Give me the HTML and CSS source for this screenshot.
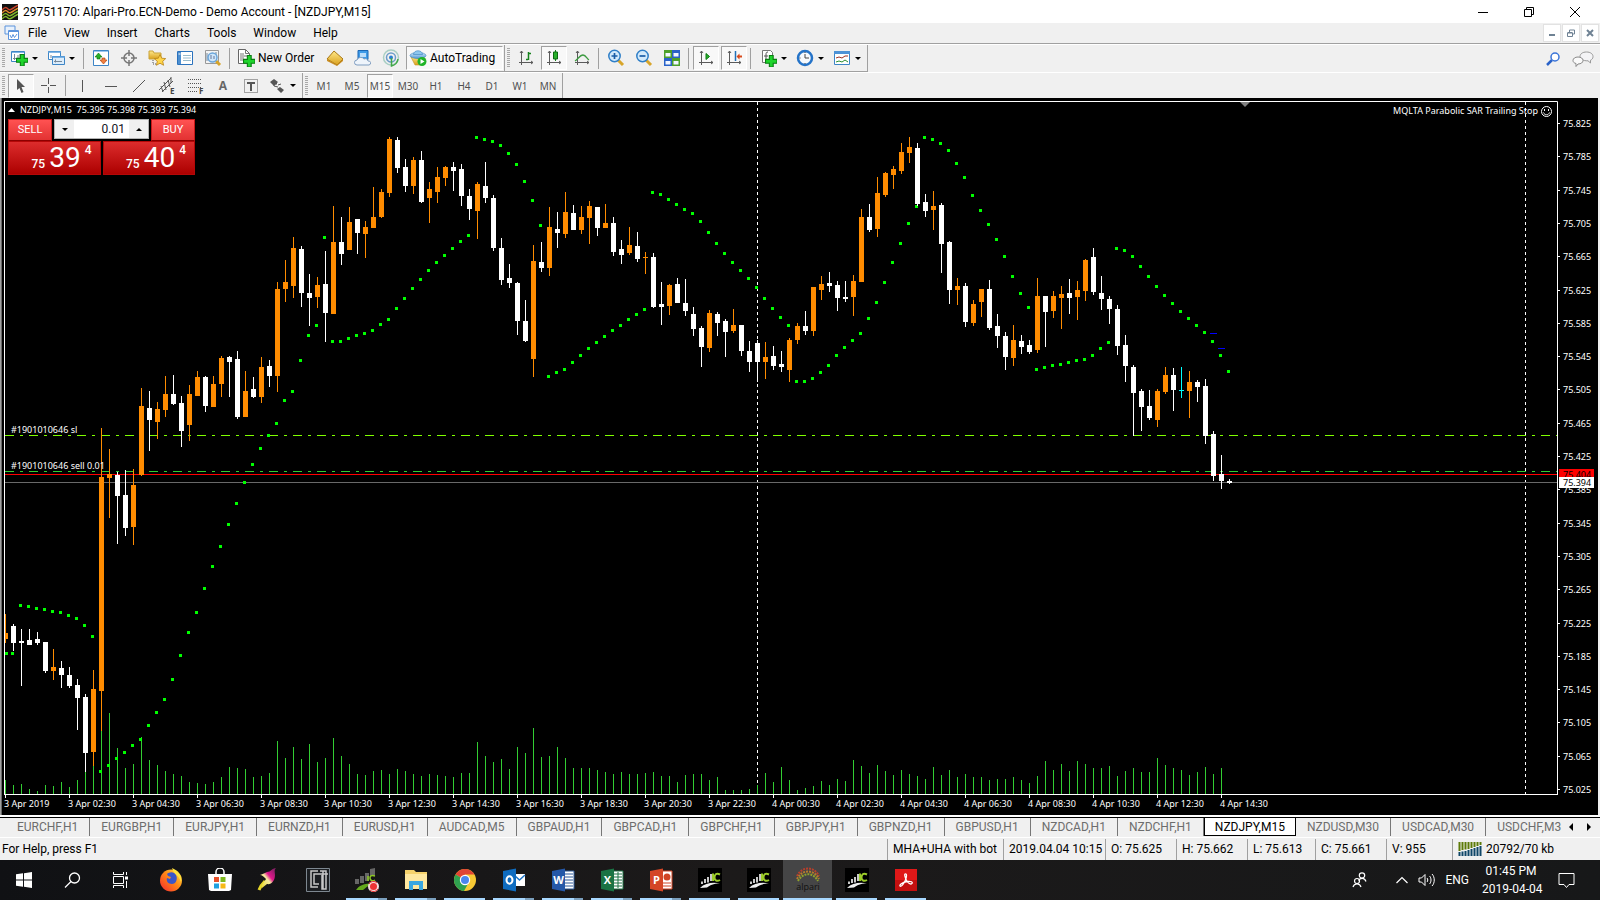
FILE: index.html
```html
<!DOCTYPE html>
<html lang="en">
<head>
<meta charset="utf-8">
<title>29751170: Alpari-Pro.ECN-Demo - Demo Account - [NZDJPY,M15]</title>
<link rel="stylesheet" href="styles.css">
</head>
<body>
<svg class="defs" width="0" height="0" aria-hidden="true">
  <defs>
    <linearGradient id="gold" x1="0" y1="0" x2="0" y2="1"><stop offset="0" stop-color="#ffe98a"/><stop offset="1" stop-color="#d9a01c"/></linearGradient>
    <linearGradient id="sky" x1="0" y1="0" x2="0" y2="1"><stop offset="0" stop-color="#d8ecfb"/><stop offset="1" stop-color="#4d97d6"/></linearGradient>
    <linearGradient id="fox" x1="0" y1="1" x2="1" y2="0"><stop offset="0" stop-color="#f5252f"/><stop offset=".55" stop-color="#ff8a16"/><stop offset="1" stop-color="#fff04a"/></linearGradient>
    <linearGradient id="pix" x1="0" y1="1" x2="1" y2="0"><stop offset="0" stop-color="#e8d821"/><stop offset=".45" stop-color="#f5e9a0"/><stop offset=".6" stop-color="#e0188c"/><stop offset="1" stop-color="#70205c"/></linearGradient>
    <symbol id="plus" viewBox="0 0 11 11"><path d="M4 .5h3.500v3.500h3.500v3.500H7.500v3.500H4V7.500H.5V4H4z" fill="#1fd42c" stroke="#0a7d12" stroke-width="1"/></symbol>
    <symbol id="axes" viewBox="0 0 16 16"><path d="M3.500 1v14M1 12.500h14M2 3l1.500-2L5 3M13 11l2 1.500-2 1.500" fill="none" stroke="#5a5a5a"/></symbol>
    <symbol id="ic" viewBox="0 0 24 24"><path d="M0 0h24v24H0z" fill="#000"/><path d="M3 16v-2.500h2V16zM6 15v-4h2v4zM9 14.500V9h2v5.500zM12 13V6h2v7z" fill="#c9c9c9"/><path d="M15 5.500V13" stroke="#9ccb2a" stroke-width="2"/><path d="M22 6.500c-4-2-5.500.5-5.500 3s2 4.500 5.500 2.500" stroke="#9ccb2a" stroke-width="2" fill="none"/><path d="M2 20c5-5 13-6 20-4.500-7 0-10 2-13 4z" fill="#eee"/></symbol>
  </defs>
</svg>

<header class="titlebar">
  <svg class="app-icon" width="16" height="16" viewBox="0 0 16 16"><path d="M0 0h16v16H0z" fill="#111"/><path d="M0 6c3-3 4-3 6-1s4 0 10-4" stroke="#c8432a" stroke-width="1.500" fill="none"/><path d="M0 9c3-3 4-3 6-1s4 0 10-4" stroke="#e08b2c" stroke-width="1.500" fill="none"/><path d="M0 12c3-3 4-3 6-1s4 0 10-4M0 15c3-3 4-3 6-1s4 0 10-4" stroke="#7fb52c" stroke-width="1.500" fill="none"/></svg>
  <h1 class="title">29751170: Alpari-Pro.ECN-Demo - Demo Account - [NZDJPY,M15]</h1>
  <button class="win-btn" aria-label="Minimize"><svg width="10" height="10"><path d="M0 5.500h10" stroke="#000"/></svg></button>
  <button class="win-btn" aria-label="Restore"><svg width="10" height="10"><path d="M.5 2.500h7v7h-7zM2.500 2.500v-2h7v7h-2" stroke="#000" fill="none"/></svg></button>
  <button class="win-btn" aria-label="Close"><svg width="10" height="10"><path d="M0 0l10 10M10 0L0 10" stroke="#000"/></svg></button>
</header>

<nav class="menubar" aria-label="Main menu">
  <svg class="menu-icon" width="16" height="16" viewBox="0 0 16 16"><path d="M1 1h10v8H1z" fill="#e8f1fc" stroke="#5b93dc"/><path d="M4.500 5.500h10v9h-10z" fill="#fff" stroke="#5b93dc"/><path d="M5 6.500h9" stroke="#5b93dc"/><path d="M6 10l1.500 3L9 9.500l1.500 3L13 9" stroke="#5b93dc" fill="none"/></svg>
  <button>File</button><button>View</button><button>Insert</button><button>Charts</button><button>Tools</button><button>Window</button><button>Help</button>
  <span class="mdi">
    <button aria-label="Minimize chart"><svg width="8" height="8"><path d="M1 6h6" stroke="#6f8294" stroke-width="2"/></svg></button>
    <button aria-label="Restore chart"><svg width="8" height="8"><path d="M.5 4h5v3.500h-5zM2.500 3V1h5v4H6M.5 3.500h5" stroke="#6f8294" fill="none"/></svg></button>
    <button aria-label="Close chart"><svg width="8" height="8"><path d="M1 1l6 6M7 1L1 7" stroke="#6f8294" stroke-width="2"/></svg></button>
  </span>
</nav>

<div class="toolrow">
  <div class="toolbar">
    <i class="grip"></i>
    <button class="dd" aria-label="New chart"><svg width="18" height="18" viewBox="0 0 18 18"><path d="M1.500 2.500h13v10h-13z" fill="#fff" stroke="#3d85c6"/><path d="M2 3.500h12" stroke="#7db4e6"/><path d="M4.500 5v6M3 9.500h3M8 6v3M10 5v4" stroke="#789"/><use href="#plus" x="6" y="5" width="12" height="12"/></svg><i class="caret"></i></button>
    <button class="dd" aria-label="Profiles"><svg width="18" height="18" viewBox="0 0 18 18"><path d="M1.500 2.500h12v8h-12z" fill="#fff" stroke="#3d85c6"/><path d="M5.500 7.500h12v8h-12z" fill="#dcecfa" stroke="#3d85c6"/><path d="M1 3h13M5 8h13" stroke="#5b9fdb" stroke-width="1.500"/><path d="M7 12.500h8M8.500 10.500v3M4 6v3" stroke="#789"/></svg><i class="caret"></i></button>
    <i class="sep"></i>
    <button class="tool" aria-label="Market Watch"><svg width="18" height="18" viewBox="0 0 18 18"><path d="M1.500 1.500h15v15h-15z" fill="#fff" stroke="#3d85c6"/><path d="M2 2.500h14" stroke="#9cc6ee"/><path d="M6.500 4l3.500 4H8v2H5V8H3z" fill="#27b02a" stroke="#08730d" stroke-width=".6"/><path d="M11.500 15L8 11h2V9h3v2h2z" fill="#f08040" stroke="#a83a08" stroke-width=".6"/></svg></button>
    <button class="tool" aria-label="Data Window"><svg width="16" height="16" viewBox="0 0 16 16"><circle cx="8" cy="8" r="5" fill="#eee" stroke="#777" stroke-width="1.500"/><path d="M8 0v6M8 10v6M0 8h6M10 8h6" stroke="#777" stroke-width="1.500"/></svg></button>
    <button class="tool" aria-label="Navigator"><svg width="18" height="18" viewBox="0 0 18 18"><path d="M1 10V2h4l1 2h7v6z" fill="url(#gold)" stroke="#c9a33a"/><path d="M5 11v4h4" stroke="#555" stroke-dasharray="1 1" fill="none"/><path d="M12 5.500l1.700 3.700 4 .4-3 2.700.9 4-3.600-2.100-3.600 2.100.9-4-3-2.700 4-.4z" fill="#ffd54a" stroke="#b88214" stroke-width=".8"/></svg></button>
    <button class="tool" aria-label="Terminal"><svg width="16" height="16" viewBox="0 0 16 16"><path d="M.5 1.500h15v13H.5z" fill="#fff" stroke="#2a72bd"/><path d="M1 2h3v12H1z" fill="#4d8fd0"/><path d="M6 5.500h8M6 8h8M6 10.500h8" stroke="#9bc"/><path d="M1.500 4h2" stroke="#fff"/></svg></button>
    <button class="tool" aria-label="Strategy Tester"><svg width="18" height="18" viewBox="0 0 18 18"><path d="M1.500 1.500h13v13h-13z" fill="#f4f4f4" stroke="#999"/><path d="M3 4v8M12 3v5" stroke="#789"/><path d="M12 12l4 4" stroke="#d8a52a" stroke-width="3"/><circle cx="8.500" cy="8.500" r="4.500" fill="#cfe6fa" stroke="#6aa5da" stroke-width="1.500"/><path d="M7 6v4M10 7v3" stroke="#679"/></svg></button>
    <i class="sep"></i>
    <button class="neworder"><svg width="18" height="18" viewBox="0 0 18 18"><path d="M1.500.5h7l4 4v10h-11z" fill="#fff" stroke="#666"/><path d="M8.500.5v4h4M3 5h4M3 7h7M3 9h4M3 11h4" stroke="#777" fill="none"/><use href="#plus" x="6" y="6" width="12" height="12"/></svg>New Order</button>
    <button class="tool" aria-label="MetaEditor"><svg width="18" height="18" viewBox="0 0 18 18"><path d="M8 2l9 8-6 6-10-6z" fill="url(#gold)" stroke="#a97815"/><path d="M1 10l10 6 6-6v2l-6 5-10-5z" fill="#c98d20"/></svg></button>
    <button class="tool" aria-label="Virtual Hosting"><svg width="18" height="18" viewBox="0 0 18 18"><path d="M4 1.500h10v9H4z" fill="#3f9be8" stroke="#1a66b4"/><path d="M6 5h6M6 7h6" stroke="#e6f3ff" stroke-width="1.500"/><path d="M3 16a2.500 2.500 0 010-5 4 4 0 017-1 3 3 0 014 2 2 2 0 011 4z" fill="#eef4fb" stroke="#7f9dc0"/></svg></button>
    <button class="tool" aria-label="Signals"><svg width="18" height="18" viewBox="0 0 18 18" fill="none"><circle cx="9" cy="8.500" r="7.500" stroke="#a9cfc4" stroke-width="1.500"/><circle cx="9" cy="8.500" r="4.500" stroke="#6d9cc9" stroke-width="1.500"/><circle cx="9" cy="8.500" r="2" fill="#2a7fd2"/><path d="M9.500 9v8c4-1 6-4 6.500-7" stroke="#42a848" stroke-width="1.500"/></svg></button>
    <button class="auto pressed"><svg width="18" height="18" viewBox="0 0 18 18"><path d="M2 8l14-1-5 9H6z" fill="url(#gold)" stroke="#c29322" stroke-width=".6"/><ellipse cx="9" cy="6.500" rx="8" ry="3" fill="url(#sky)" stroke="#3682c0" stroke-width=".6"/><path d="M4.500 5.500c0-5 9-5 9 0z" fill="#8fc7ee" stroke="#3682c0" stroke-width=".6"/><circle cx="13" cy="12.500" r="4.500" fill="#20b428"/><path d="M11.500 10v5l4-2.500z" fill="#fff"/></svg>AutoTrading</button>
    <i class="edge"></i><i class="grip"></i>
    <button class="tool" aria-label="Bar chart"><svg width="16" height="16" viewBox="0 0 16 16"><use href="#axes" width="16" height="16"/><path d="M10.500 2v8M8 9.500h2M11 3.500h2" stroke="#16821c" stroke-width="1.500"/></svg></button>
    <button class="tool pressed" aria-label="Candlesticks"><svg width="16" height="16" viewBox="0 0 16 16"><use href="#axes" width="16" height="16"/><path d="M9.500 0v11" stroke="#16821c"/><path d="M7.500 2h4v7h-4z" fill="#27b02a" stroke="#0a6a10"/></svg></button>
    <button class="tool" aria-label="Line chart"><svg width="16" height="16" viewBox="0 0 16 16"><use href="#axes" width="16" height="16"/><path d="M1 11c3-2 5-6 8-6s4 4 6 5" stroke="#3c9a40" stroke-width="1.300" fill="none"/></svg></button>
    <i class="sep"></i>
    <button class="tool" aria-label="Zoom In"><svg width="18" height="18" viewBox="0 0 18 18"><path d="M11 11l5 5" stroke="#d8a52a" stroke-width="3"/><circle cx="7.500" cy="7" r="5.700" fill="#d3eafb" stroke="#2f7fc8" stroke-width="1.500"/><path d="M4.500 7h6M7.500 4v6" stroke="#1a5da6" stroke-width="1.700"/></svg></button>
    <button class="tool" aria-label="Zoom Out"><svg width="18" height="18" viewBox="0 0 18 18"><path d="M11 11l5 5" stroke="#d8a52a" stroke-width="3"/><circle cx="7.500" cy="7" r="5.700" fill="#d3eafb" stroke="#2f7fc8" stroke-width="1.500"/><path d="M4.500 7h6" stroke="#1a5da6" stroke-width="1.700"/></svg></button>
    <button class="tool" aria-label="Tile Windows"><svg width="16" height="16" viewBox="0 0 16 16"><path d="M0 0h8v8H0zM8 8h8v8H8z" fill="#4da02a"/><path d="M8 0h8v8H8zM0 8h8v8H0z" fill="#2a62c8"/><path d="M1.500 3h5v3.500h-5zM9.500 3h5v3.500h-5zM1.500 11h5v3.500h-5zM9.500 11h5v3.500h-5z" fill="#f2f7ff"/></svg></button>
    <i class="sep"></i>
    <button class="tool pressed" aria-label="Auto Scroll"><svg width="16" height="16" viewBox="0 0 16 16"><use href="#axes" width="16" height="16"/><path d="M8 3.500v6L11.500 6.500z" fill="#27b02a" stroke="#0a7a10"/></svg></button>
    <button class="tool pressed" aria-label="Chart Shift"><svg width="16" height="16" viewBox="0 0 16 16"><use href="#axes" width="16" height="16"/><path d="M9.500 1v10" stroke="#2070b8" stroke-width="1.500"/><path d="M10.500 6.500l3-3v2H16v2h-2.500v2z" fill="#d84a1c"/></svg></button>
    <i class="sep wide"></i>
    <button class="dd" aria-label="Indicators"><svg width="18" height="18" viewBox="0 0 18 18"><path d="M3.500 1.500h8l2 2v10h-10z" fill="#fff" stroke="#777"/><path d="M9 3c-2 0-2 1-2 3v6M5 7h4" stroke="#555" fill="none"/><use href="#plus" x="6" y="6" width="12" height="12"/></svg><i class="caret"></i></button>
    <button class="dd" aria-label="Periodicity"><svg width="18" height="18" viewBox="0 0 18 18"><circle cx="9" cy="9" r="7" fill="#f5f9fd" stroke="#2473c8" stroke-width="2.500"/><path d="M9 5v4h4M9 3v1M9 14v1M3.500 9h1" stroke="#444" fill="none"/></svg><i class="caret"></i></button>
    <button class="dd" aria-label="Templates"><svg width="18" height="18" viewBox="0 0 18 18"><path d="M1.500 2.500h15v13h-15z" fill="#fff" stroke="#3d85c6"/><path d="M1 3.500h16" stroke="#4d92d6" stroke-width="3"/><path d="M3 9l3-1 3 1 3-2 3 0" stroke="#a03020" fill="none"/><path d="M3 13l3-1 3 1 3-2 3 2" stroke="#2c9030" fill="none"/></svg><i class="caret"></i></button>
    <i class="edge"></i>
  </div>
  <div class="tool-right">
    <button aria-label="Search"><svg width="14" height="14" viewBox="0 0 14 14"><path d="M1 13l5-5" stroke="#2a62c8" stroke-width="2.500"/><circle cx="9" cy="5" r="4" fill="#fff" stroke="#3a74d8" stroke-width="1.500"/></svg></button>
    <button aria-label="Chat"><svg width="22" height="16" viewBox="0 0 22 16"><path d="M14.500 1c4 0 6.500 2 6.500 4.500 0 2-1 3-2.500 3.700V12l-2.500-2.200C11 10 8 8 8 5.500S10.500 1 14.500 1z" fill="#f4f4f6" stroke="#999"/><path d="M6 6c3 0 5 1.500 5 3.500S9 13 6 13l-2 2.500v-3C2 12 1 11 1 9.500 1 7.500 3 6 6 6z" fill="#fafafa" stroke="#888"/></svg></button>
  </div>
</div>

<div class="toolrow second">
  <div class="toolbar">
    <i class="grip"></i>
    <button class="tool pressed" aria-label="Cursor"><svg width="12" height="16" viewBox="0 0 12 16"><path d="M2 1l8 8H6.500l2 5-2 1-2-5L2 12z" fill="#555"/></svg></button>
    <button class="tool" aria-label="Crosshair"><svg width="16" height="16"><path d="M7.500 0v6M7.500 9v6M0 7.500h6M9 7.500h6" stroke="#555"/></svg></button>
    <i class="sep"></i>
    <button class="tool" aria-label="Vertical line"><svg width="14" height="14"><path d="M6.500 1v12" stroke="#555"/></svg></button>
    <button class="tool" aria-label="Horizontal line"><svg width="14" height="14"><path d="M1 7.500h12" stroke="#555"/></svg></button>
    <button class="tool" aria-label="Trendline"><svg width="14" height="14"><path d="M1 13L13 1" stroke="#555"/></svg></button>
    <button class="tool" aria-label="Equidistant channel"><svg width="17" height="18"><path d="M0 13L12 1M3 15L14 4M2 9l2 6M5 5l2 8M9 3l2 7M12 0l0 6" stroke="#555"/><text x="11" y="17" class="ic-t">E</text></svg></button>
    <button class="tool" aria-label="Fibonacci"><svg width="17" height="18"><path d="M1 2.500h14M1 6.500h14M1 10.500h14M1 14.500h9" stroke="#555" stroke-dasharray="1 1"/><text x="12" y="17" class="ic-t">F</text></svg></button>
    <button class="tool" aria-label="Text"><span class="letter">A</span></button>
    <button class="tool" aria-label="Text label"><svg width="14" height="14"><path d="M.5.5h13v13H.5z" fill="none" stroke="#555" stroke-dasharray="1 1"/><path d="M3 4h8M7 4v8" stroke="#555" stroke-width="2"/></svg></button>
    <button class="dd" aria-label="Arrows"><svg width="18" height="18" viewBox="0 0 18 18"><path d="M5 3l4 4H6v2l4 1" fill="none" stroke="#555"/><path d="M2 5l4-3 4 3-4 4zM9 12l3-2 4 3-3 3z" fill="#555"/><path d="M10 8l3-1" stroke="#555"/></svg><i class="caret"></i></button>
    <i class="edge"></i><i class="grip"></i>
    <button class="tool tf">M1</button><button class="tool tf">M5</button><button class="tool tf pressed">M15</button><button class="tool tf">M30</button><button class="tool tf">H1</button><button class="tool tf">H4</button><button class="tool tf">D1</button><button class="tool tf">W1</button><button class="tool tf">MN</button>
    <i class="edge"></i>
  </div>
</div>

<main class="chart">
  <svg id="plot" viewBox="0 98 1600 717" preserveAspectRatio="xMinYMin meet" role="img" aria-label="NZDJPY M15 candlestick chart"></svg>
  <section class="trade" aria-label="One click trading">
    <button class="side">SELL</button>
    <span class="spin"><button aria-label="Decrease volume"><i class="caret"></i></button><input value="0.01" aria-label="Volume"><button aria-label="Increase volume"><i class="caret up"></i></button></span>
    <button class="side">BUY</button>
    <button class="price"><span>75</span><b>39</b><sup>4</sup></button>
    <button class="price"><span>75</span><b>40</b><sup>4</sup></button>
  </section>
</main>

<nav class="tabs" aria-label="Charts">
  <button>EURCHF,H1</button><button>EURGBP,H1</button><button>EURJPY,H1</button><button>EURNZD,H1</button><button>EURUSD,H1</button><button>AUDCAD,M5</button><button>GBPAUD,H1</button><button>GBPCAD,H1</button><button>GBPCHF,H1</button><button>GBPJPY,H1</button><button>GBPNZD,H1</button><button>GBPUSD,H1</button><button>NZDCAD,H1</button><button>NZDCHF,H1</button><button class="active">NZDJPY,M15</button><button>NZDUSD,M30</button><button>USDCAD,M30</button><button class="last">USDCHF,M3</button>
  <span class="scroll"><button aria-label="Scroll left"><i class="caret left"></i></button><button aria-label="Scroll right"><i class="caret right"></i></button></span>
</nav>

<footer class="status">
  <span class="help">For Help, press F1</span>
  <span class="w116">MHA+UHA with bot</span><span class="w102">2019.04.04 10:15</span><span class="w71">O: 75.625</span><span class="w71">H: 75.662</span><span class="w68">L: 75.613</span><span class="w71">C: 75.661</span><span class="w66">V: 955</span>
  <span class="conn"><svg width="24" height="14" viewBox="0 0 24 14"><path d="M1.500 0v9M4.500 0v8M7.500 0v7.500M10.500 0v7M13.500 0v6M16.500 0v5M19.500 0v4M22.500 0v3" stroke="#5d7a08" stroke-width="2"/><path d="M1.500 14v-4M4.500 14V9.500M7.500 14V9M10.500 14V8M13.500 14V7M16.500 14V6M19.500 14V5M22.500 14V4" stroke="#0f4668" stroke-width="2"/></svg>20792/70 kb</span>
</footer>

<nav class="taskbar" aria-label="Taskbar">
  <button class="sys" aria-label="Start"><svg width="16" height="16"><path d="M0 2.300l7-1v6.200H0zM8 1.200L16 0v7.500H8zM0 8.500h7v6.200l-7-1zM8 8.500h8V16l-8-1.200z" fill="#fff"/></svg></button>
  <button class="sys" aria-label="Search"><svg width="17" height="17"><circle cx="10.500" cy="6" r="5" stroke="#fff" fill="none" stroke-width="1.300"/><path d="M7 9.500L1 15.500" stroke="#fff" stroke-width="1.300"/></svg></button>
  <button class="sys" aria-label="Task View"><svg width="17" height="16"><path d="M1.500 4.500h10v7h-10zM1.500 0v2.500h10V0M1.500 16v-2.500h10V16M14.500 0v3M14.500 9v7" stroke="#fff" fill="none"/><path d="M13 4.500h3v3h-3z" fill="#fff"/></svg></button>
  <button aria-label="Firefox"><svg width="24" height="24"><circle cx="12" cy="12.500" r="11" fill="url(#fox)"/><path d="M8 6c2-2 7-3 9 1s0 9-4 9-6-3-5-6l3 1 1-2-3-1z" fill="#3a56c8"/><path d="M13 0c7 3 10 8 9 14-2-7-7-7-9-14z" fill="#ffe23c"/></svg></button>
  <button aria-label="Store"><svg width="24" height="24"><path d="M8 6V4a4 4 0 018 0v2" stroke="#fff" stroke-width="1.500" fill="none"/><path d="M0 6h24l-1 16-2 1H3l-2-1z" fill="#fff"/><path d="M6 9h5v5H6z" fill="#e8502a"/><path d="M12.500 9h5v5h-5z" fill="#7db81c"/><path d="M6 15.500h5v5H6z" fill="#1ea0e0"/><path d="M12.500 15.500h5v5h-5z" fill="#f6b916"/></svg></button>
  <button aria-label="Bird app"><svg width="24" height="24"><path d="M2 22c1-3 3-6 6-9" stroke="#e6d629" stroke-width="3" fill="none"/><path d="M5 17l4-6c-2-2-4-4-6-4 3-1 5-2 7-3 4 0 5-4 9-4-2 2-1 4-1 7 0 6-4 10-8 9l-5 4z" fill="url(#pix)"/></svg></button>
  <button aria-label="CCT"><svg width="24" height="24"><path d="M.5.500h23v23H.5z" fill="#1b1e22" stroke="#7d8790"/><path d="M12 3H5v16h7M13 6H8v10h5M11 6h11M17 3v18M14 3h6v18h-4v-14" stroke="#c8c8c8" fill="none" stroke-width="1.500"/></svg></button>
  <button class="run multi" aria-label="IC Markets"><svg width="24" height="24"><path d="M0 16v-5h4v5zM5 15V8h4v7zM10 13V5h4v8zM15 8V1l5-1v8z" fill="#666"/><path d="M13 8v5M20 8c-4-1-5 0-5 2s2 4 5 2" stroke="#8cc820" stroke-width="1.500" fill="none"/><path d="M1 22c4-6 10-7 20-6-8 1-9 3-13 6z" fill="#64a81c"/><circle cx="18.500" cy="18.500" r="5.500" fill="#f3dede"/><circle cx="18.500" cy="18.500" r="3.500" fill="#e33"/><path d="M14 16a5 5 0 018-1M23 21a5 5 0 01-8 1" stroke="#e33" fill="none"/></svg></button>
  <button class="run multi" aria-label="File Explorer"><svg width="24" height="22"><path d="M1 1h9l2 2h11v17H1z" fill="#f6d26c"/><path d="M1 5h22v15H1z" fill="#ffe8a0"/><path d="M5 21v-9h14v9h-4v-5H9v5z" fill="#3aa7e0"/></svg></button>
  <button class="run" aria-label="Chrome"><svg width="24" height="24"><circle cx="12" cy="12" r="11" fill="#f7c934"/><path d="M12 12L2.500 6.500A11 11 0 0121.500 6.500H12z" fill="#e04434"/><path d="M12 12L2.500 6.500A11 11 0 0011 23l5-9z" fill="#2fa14f"/><circle cx="12" cy="12" r="5.200" fill="#fff"/><circle cx="12" cy="12" r="4" fill="#4a86ee"/></svg></button>
  <button class="run multi" aria-label="Outlook"><svg width="24" height="24"><path d="M12 6h11v12H12z" fill="#fff"/><path d="M12 7l5.500 5L23 7" stroke="#1b74c8" stroke-width="1.500" fill="none"/><path d="M1 3l13-2.500v23L1 21z" fill="#0f6cc0"/><ellipse cx="7.500" cy="12" rx="3" ry="3.700" stroke="#fff" stroke-width="2" fill="none"/></svg></button>
  <button class="run multi" aria-label="Word"><svg width="24" height="24"><path d="M12 3h11v18H12z" fill="#fff" stroke="#2b5797"/><path d="M14 6h8M14 9h8M14 12h8M14 15h8M14 18h8" stroke="#2b5797"/><path d="M1 3l13-2.500v23L1 21z" fill="#2558a8"/><text x="7.500" y="16" class="of">W</text></svg></button>
  <button class="run multi" aria-label="Excel"><svg width="24" height="24"><path d="M12 3h11v18H12z" fill="#fff" stroke="#1f7244"/><path d="M14 6h8M14 9h8M14 12h8M14 15h8M14 18h8M18 4v16" stroke="#1f7244"/><path d="M1 3l13-2.500v23L1 21z" fill="#1a7344"/><text x="7.500" y="16" class="of">X</text></svg></button>
  <button class="run multi" aria-label="PowerPoint"><svg width="24" height="24"><path d="M12 3h11v18H12z" fill="#fff" stroke="#d04525"/><circle cx="18" cy="9" r="3.500" fill="#d04525"/><path d="M14 15h8M14 18h8" stroke="#d04525"/><path d="M1 3l13-2.500v23L1 21z" fill="#d44626"/><text x="7.500" y="16" class="of">P</text></svg></button>
  <button class="run" aria-label="IC terminal 1"><svg width="24" height="24"><use href="#ic" width="24" height="24"/></svg></button>
  <button class="run" aria-label="IC terminal 2"><svg width="24" height="24"><use href="#ic" width="24" height="24"/></svg></button>
  <button class="run current" aria-label="Alpari"><svg width="26" height="26"><g fill="none" stroke-width="2" stroke-dasharray="2 1"><path d="M2 9c5-10 17-10 22 0" stroke="#b8402c"/><path d="M2 12c5-10 17-10 22 0" stroke="#b87a2c"/><path d="M3 14c5-9 15-9 20 0" stroke="#8fa02c"/></g><text x="13" y="23" class="alp">alpari</text></svg></button>
  <button class="run" aria-label="IC terminal 3"><svg width="24" height="24"><use href="#ic" width="24" height="24"/></svg></button>
  <button class="run" aria-label="Acrobat Reader"><svg width="22" height="22"><path d="M0 0h22v22H0z" fill="#c41010"/><path d="M0 0h22v11H0z" fill="#e01818"/><path d="M10 5c2-1 2 3 0 7s-4 6-5 5 3-4 7-4.500 6 .5 5 2-5-1-6-4-2-5-1-5.500z" fill="none" stroke="#fff" stroke-width="1.300"/></svg></button>
  <div class="tray">
    <button class="people" aria-label="People"><svg width="15" height="16"><g fill="none" stroke="#fff" stroke-width="1.200"><circle cx="10" cy="3.500" r="2.700"/><path d="M6.500 8.500c2-3 6-3 7.500 1"/><circle cx="5" cy="9" r="2.500"/><path d="M1 15c1-4 7-4 8 0"/></g></svg></button>
    <button class="more" aria-label="Hidden icons"><svg width="12" height="8"><path d="M.5 7L6 1.500 11.500 7" stroke="#fff" fill="none" stroke-width="1.200"/></svg></button>
    <button aria-label="Volume"><svg width="17" height="14"><g fill="none" stroke="#fff"><path d="M1 5h2.500L7 1.500v11L3.500 9H1zM9 5c1 1 1 3 0 4M11.500 3c2 2 2 6 0 8M14 1c3 3 3 9 0 12"/></g></svg></button>
    <span class="lang">ENG</span>
    <time class="clock" datetime="2019-04-04T13:45">01:45 PM<br>2019-04-04</time>
    <button class="note" aria-label="Notifications"><svg width="17" height="17"><path d="M1 1.500h15v11h-5l-2.500 3-2.500-3H1z" fill="none" stroke="#fff"/></svg></button>
  </div>
</nav>
<script src="chart.js"></script>
</body>
</html>
```
FILE: styles.css
```css
* { box-sizing: border-box; }
body { margin: 0; height: 100vh; display: flex; flex-direction: column; background: #f0f0f0; font: 12px/16px Roboto, "Open Sans", sans-serif; color: #000; overflow: hidden; }
button { font: inherit; color: inherit; background: none; border: 0; padding: 0; margin: 0; }
svg { display: block; flex: none; }
.defs { position: absolute; }

.titlebar { height: 23px; flex: none; background: #fff; display: flex; align-items: center; padding: 0 2px; }
.title { flex: 1; margin: 0 0 0 5px; font-size: 12px; font-weight: 400; }
.win-btn { width: 46px; height: 21px; display: flex; align-items: center; justify-content: center; }

.menubar { height: 21px; flex: none; display: flex; align-items: center; padding-left: 4px; border-bottom: 1px solid #a0a0a0; }
.menubar > button { padding: 0 9px 0 8px; }
.mdi { margin-left: auto; display: flex; gap: 1px; padding-right: 1px; }
.mdi button { width: 18px; height: 18px; background: #fff; border: 1px solid #e2e2e2; display: flex; align-items: center; justify-content: center; }

.toolrow { height: 28px; flex: none; display: flex; justify-content: space-between; border-top: 1px solid #fff; }
.second { height: 26px; }
.toolbar { display: flex; align-items: center; border-bottom: 1px solid #a0a0a0; }
.second .toolbar { border-bottom: 0; }
.grip { width: 3px; height: 20px; margin: 0 2px 0 2px; background: repeating-linear-gradient(#a8a8a8 0 1px, #f0f0f0 1px 2px); }
.sep { width: 1px; height: 21px; background: #a0a0a0; margin: 0 3px 0 2px; }
.sep.wide { margin-right: 5px; }
.edge { width: 1px; align-self: stretch; background: #a0a0a0; }
.tool { width: 28px; height: 24px; display: flex; align-items: center; justify-content: center; }
.dd { width: 37px; height: 24px; display: flex; align-items: center; padding-left: 3px; gap: 4px; }
.pressed { background: #f8f8f8; border: 1px solid; border-color: #a0a0a0 #fff #fff #a0a0a0; }
.tool.pressed { width: 26px; margin: 0 1px; }
.caret { display: block; flex: none; border: 3px solid transparent; border-top-color: #000; border-bottom: 0; width: 0; height: 0; }
.caret.up { border: 3px solid transparent; border-top: 0; border-bottom-color: #000; }
.caret.left { border: 4px solid transparent; border-right-color: #000; border-left: 0; }
.caret.right { border: 4px solid transparent; border-left-color: #000; border-right: 0; }
.neworder { width: 88px; display: flex; align-items: center; gap: 3px; padding-left: 4px; white-space: nowrap; }
.auto { width: 97px; height: 24px; margin: 0 1px; display: flex; align-items: center; gap: 3px; padding-left: 2px; white-space: nowrap; }
.tf { font: 10px/12px "Noto Sans", sans-serif; color: #505050; }
.letter { font: 700 12px/14px "Open Sans", sans-serif; color: #666; }
.ic-t { font: 700 8px "Noto Sans", sans-serif; fill: #444; }
.tool-right { display: flex; align-items: center; gap: 12px; padding-right: 6px; }

.chart { flex: 1; min-height: 0; position: relative; background: #000; border-right: 2px solid #f0f0f0; }
#plot { width: 100vw; height: 100%; }
#plot text { font: 9px "Noto Sans", sans-serif; fill: #fff; }
#plot .tag { fill: #000; }
.trade { position: absolute; left: 8px; top: 21px; display: flex; flex-wrap: wrap; width: 187px; gap: 0 2px; color: #fff; }
.side { width: 44px; height: 22px; font-size: 11px; background: linear-gradient(#ff5252, #e23232); border: 1px solid #c81818; border-bottom: 1px solid #8c0000; }
.spin { width: 95px; height: 20px; display: flex; background: #f0f0f0; border: 1px solid #b4b4b4; }
.spin button { width: 19px; display: flex; align-items: center; justify-content: center; }
.spin input { flex: 1; min-width: 0; border: 0; padding: 0 4px 0 0; text-align: right; font: inherit; color: #112; background: #fff; }
.price { flex: 1; height: 34px; display: flex; align-items: flex-end; justify-content: flex-end; padding-right: 8px; gap: 4px; background: linear-gradient(#dc2c2c, #ac0000); border: 1px solid #b40808; }
.price span { line-height: 20px; font-weight: 500; }
.price b { font: 400 28px/32px Roboto, sans-serif; }
.price sup { font: 500 12px/16px Roboto, sans-serif; align-self: flex-start; }

.tabs { height: 22px; flex: none; display: flex; border-top: 2px solid #fff; background: #f0f0f0; box-shadow: inset 0 1px #000; padding-left: 6px; color: #6d6d6d; }
.tabs > button { height: 18px; padding: 0 11px; margin-top: 1px; white-space: nowrap; border-right: 1px solid #777; }
.tabs > button.active { background: #fff; color: #000; border: 1px solid #000; border-top: 0; padding: 0 10px; }
.tabs > button.last { border: 0; padding-right: 0; }
.scroll { margin-left: auto; display: flex; align-items: center; gap: 14px; padding-right: 9px; }

.status { height: 23px; flex: none; display: flex; align-items: center; border-top: 1px solid #fff; white-space: nowrap; }
.status span { border-left: 1px solid #a0a0a0; height: 21px; line-height: 21px; padding-left: 5px; flex: none; }
.status .help { flex: 1; border: 0; padding-left: 2px; }
.w116 { width: 116px; } .w102 { width: 102px; } .w71 { width: 71px; } .w68 { width: 68px; } .w66 { width: 66px; }
.status .conn { width: 148px; display: flex; align-items: center; gap: 4px; }

.taskbar { height: 40px; flex: none; display: flex; background: linear-gradient(90deg, #101114, #1c1a1a 45%, #171819); color: #fff; }
.taskbar > button { width: 49px; display: flex; align-items: center; justify-content: center; position: relative; }
.taskbar > button.sys { width: 48px; }
.sys + button:not(.sys) { margin-left: 2px; }
.run::after { content: ""; position: absolute; left: 4px; right: 4px; bottom: 0; height: 2px; background: #a8d8ff; }
.multi::after { background: linear-gradient(90deg, #a8d8ff 0 32px, #7ba0be 32px); }
.current { background: #454546; }
.current::after { left: 0; right: 0; }
.of { font: 700 11px "Open Sans", sans-serif; fill: #fff; text-anchor: middle; }
.alp { font: 9px "Open Sans", sans-serif; fill: #111; text-anchor: middle; }
.tray { margin-left: auto; display: flex; align-items: center; padding-right: 25px; }
.people { margin-right: 29px; }
.more { margin-right: 10px; }
.lang { margin: 0 13px 0 10px; }
.clock { text-align: center; line-height: 18px; width: 58px; white-space: nowrap; }
.note { margin-left: 18px; }
```
FILE: chart.js
```js
// One entry per bar: colour (o/w/c), high, low, body top, body bottom.
const bars = `o614 643 633 639,w624 651 626 643,w629 686 641 643,w629 645 640 645,w632 645 639 643,w642 673 642 671,o649 680 667 671,w661 688 668 675,w667 688 675 686,w679 730 685 698,w694 772 697 753,o670 766 689 752,o428 731 477 691,o449 518 474 478,w472 544 475 496,w470 536 495 528,o469 545 485 527,o388 476 406 475,w391 451 408 420,o402 439 409 422,o376 417 394 410,w375 405 394 404,w396 447 403 431,o385 441 394 425,o371 396 377 396,w376 412 377 406,o376 407 384 407,o356 397 358 384,w356 397 357 362,w351 419 359 417,o371 417 391 417,w377 398 389 397,o357 403 367 397,w360 387 366 376,o282 392 289 376,o260 302 282 289,o237 298 248 286,w246 307 249 293,w274 326 293 298,o277 308 285 297,w251 342 284 313,o206 314 242 314,w217 265 242 254,o207 250 222 250,w219 254 219 233,o221 258 227 234,o187 228 217 228,o189 218 192 217,o137 197 139 193,w137 173 140 168,w159 192 167 186,o157 194 160 186,w151 203 160 202,o182 223 189 198,o167 203 177 192,o166 186 167 178,w162 191 167 171,w164 206 169 196,w189 220 196 209,o182 239 184 211,w162 203 186 198,w195 251 198 248,w238 285 248 280,w264 288 278 283,w282 335 283 321,w300 342 321 341,o245 377 261 359,w242 272 262 268,o207 276 227 268,w212 248 229 233,o192 238 212 234,w205 230 213 230,o206 234 217 230,o201 244 206 218,w207 236 207 228,o204 228 223 228,w217 256 223 252,w240 264 249 255,o227 255 245 253,w232 262 246 259,o252 274 257 258,w253 308 257 307,w282 325 304 307,o284 315 285 306,w278 303 284 303,w279 316 303 311,w307 336 314 329,w326 367 328 347,o310 352 313 348,w312 336 314 323,w319 357 321 332,o309 333 325 331,w325 356 325 351,w341 372 351 362,w340 382 343 362,o342 379 357 362,w346 370 356 366,w351 372 364 367,o338 382 340 370,o323 344 326 340,w311 335 326 331,o287 336 287 331,o276 300 284 290,w272 292 283 286,w281 311 285 298,w281 302 297 299,o275 316 281 297,o209 282 217 282,w204 232 217 230,o177 237 193 229,o172 197 173 195,o166 189 169 175,o143 174 152 171,o137 163 147 153,w143 206 148 204,w194 217 202 211,o191 230 206 210,w203 273 205 244,w241 304 242 290,o278 305 286 290,w283 327 286 322,o300 326 304 323,o289 317 289 302,w280 330 289 328,w314 348 326 336,w332 370 336 357,o325 366 340 358,w335 354 341 347,w340 354 345 352,o278 353 296 350,w296 347 296 312,o291 318 296 311,o286 329 294 298,w279 314 293 298,o281 320 290 297,o259 301 260 291,w248 295 257 292,w276 310 293 299,w296 324 299 309,w305 355 309 346,w335 382 345 366,w365 436 367 393,w389 431 391 407,w390 420 406 418,o389 427 391 420,o367 394 375 392,w368 411 375 390,c367 398 390 391,o371 418 382 391,w380 402 382 387,w379 444 386 436,w431 481 434 476,w455 489 474 481,w479 484 481 483`.split(",");

const volumes = [14,9,10,5,3,9,8,12,7,14,22,28,63,81,46,26,30,57,34,29,23,20,18,12,11,10,12,17,27,26,25,17,18,21,53,36,47,35,50,32,36,56,38,30,20,19,23,24,20,25,23,20,18,20,19,18,17,21,21,52,38,32,35,25,47,41,66,37,38,47,36,26,26,26,24,22,20,22,20,20,21,22,18,18,12,19,20,20,14,17,4,4,4,5,9,21,12,27,14,4,6,8,13,9,15,13,34,28,21,29,23,19,24,20,18,15,27,19,24,17,20,17,17,14,15,15,17,14,11,18,33,24,30,23,33,30,26,26,28,18,23,26,22,22,36,29,26,24,19,22,27,20,26];

const sar = [652,652,604,605,607,608,610,611,614,617,624,635,770,764,757,751,744,738,724,711,698,678,654,631,611,587,565,545,523,502,481,463,447,434,422,399,390,359,334,324,236,340,340,337,334,332,329,323,318,307,297,287,278,269,261,254,247,240,234,136,138,140,144,152,163,180,199,224,375,371,368,361,354,347,341,335,329,324,318,313,308,191,193,198,203,208,212,220,231,242,252,261,269,277,286,297,307,316,324,380,380,377,371,364,354,346,339,332,317,301,281,261,242,222,205,136,138,142,149,162,176,194,209,223,238,255,275,292,306,368,366,364,363,361,359,358,354,347,341,247,249,255,265,275,285,294,302,310,317,324,331,340,354,370];

const colours = { o: "#ff8c00", w: "#ffffff", c: "#00ffff" };
const STEP = 8, X0 = 5, BASE = 794;
const parts = [];
const rect = (x, y, w, h, fill) => parts.push(`<rect x="${x}" y="${y}" width="${w}" height="${h}" fill="${fill}"/>`);
const line = (d, stroke, dash) => parts.push(`<path d="${d}" fill="none" stroke="${stroke}"${dash ? ` stroke-dasharray="${dash}"` : ""}/>`);
const text = (x, y, s, extra = "") => parts.push(`<text x="${x}" y="${y}" ${extra}>${s}</text>`);

rect(0, 98, 1, 717, "#a0a0a0");
rect(1, 98, 1, 717, "#696969");

// Period separators
line("M757.5 102V794", "#fff", "3 3");
line("M1525.5 102V794", "#fff", "3 3");

volumes.forEach((h, i) => rect(X0 + i * STEP, BASE - h, 1, h, "#32cd32"));

// Order and price levels
line("M5 435.5H1557", "#7fff00", "9 6 3 6");
line("M5 471.5H1557", "#32cd32", "9 6 3 6");
line("M5 474.5H1557", "#ff0000");
line("M5 482.5H1557", "#696969");

sar.forEach((y, i) => rect(Math.max(5, X0 + i * STEP - 2), y, 3, 3, "#00ff00"));

bars.forEach((bar, i) => {
  const x = X0 + i * STEP, fill = colours[bar[0]];
  const [high, low, top, bottom] = bar.slice(1).split(" ").map(Number);
  rect(x, high, 1, low - high, fill);
  rect(i ? x - 2 : x, top, i ? 5 : 3, bottom - top, fill);
});
rect(1210, 333, 7, 1, "#0000ff");
rect(1218, 348, 7, 1, "#0000ff");

// Frame
line("M4.5 794.5V101.5H1557.5V794.5", "#fff");
line("M4 794.5H1558", "#fff");

// Price scale
for (let k = 0; k <= 20; k++) {
  const y = Math.round(123 + k * 33.3);
  rect(1558, y, 2, 1, "#fff");
  text(1563, y + 4, (75.825 - k * 0.04).toFixed(3));
}
rect(1559, 469, 35, 10, "#ff0000");
text(1563, 478, "75.404", 'class="tag"');
rect(1559, 477, 35, 11, "#fff");
text(1563, 486, "75.394", 'class="tag"');

// Time scale
for (let k = 0; k < 20; k++) {
  rect(X0 + k * 64, 795, 1, 3, "#fff");
  const hour = String((k * 2) % 24).padStart(2, "0");
  text(4 + k * 64, 807, k ? `${k < 12 ? 3 : 4} Apr ${hour}:30` : "3 Apr 2019");
}

// Captions
parts.push('<path d="M8 112l3.500-4 3.500 4z" fill="#fff"/><path d="M1240 102h10l-5 5z" fill="#808080"/>');
text(20, 113, "NZDJPY,M15&#160; 75.395 75.398 75.393 75.394");
text(11, 433, "#1901010646 sl");
text(11, 469, "#1901010646 sell 0.01");
text(1538, 114, "MQLTA Parabolic SAR Trailing Stop", 'text-anchor="end"');
parts.push('<g fill="none" stroke="#fff"><circle cx="1546.500" cy="111.500" r="5"/><path d="M1543.500 112.500c1 3 5 3 6 0M1544.500 109v2M1548.500 109v2"/></g>');

document.getElementById("plot").innerHTML = parts.join("");
```
